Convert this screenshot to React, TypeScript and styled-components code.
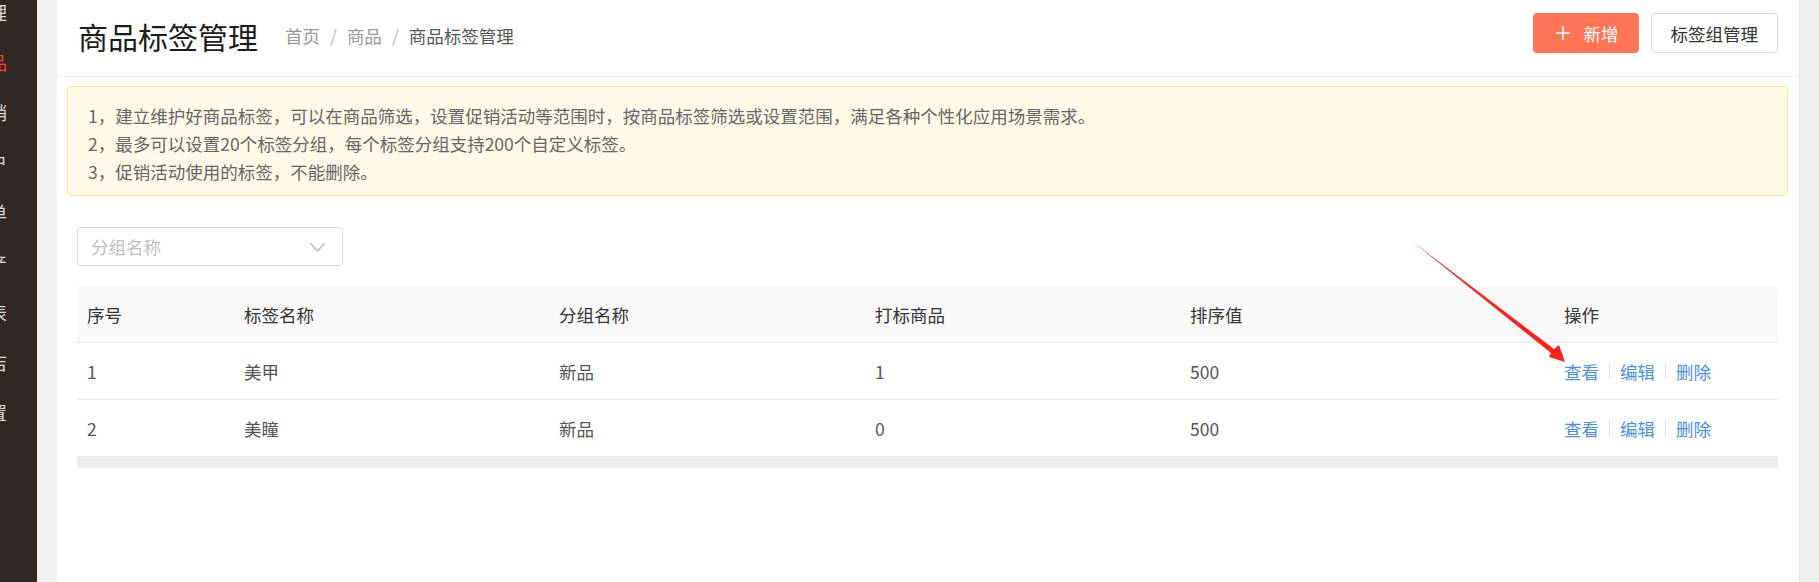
import React from 'react';
import styled, { createGlobalStyle } from 'styled-components';

type TagRow = {
    id: number;
    name: string;
    group: string;
    count: number;
    sort: number;
};

const rows: TagRow[] = [
    { id: 1, name: '美甲', group: '新品', count: 1, sort: 500 },
    { id: 2, name: '美瞳', group: '新品', count: 0, sort: 500 },
];

const menu = ['管理', '商品', '营销', '客户', '订单', '资产', '报表', '门店', '设置'];

const GlobalStyle = createGlobalStyle`
    html, body {
        margin: 0;
        padding: 0;
    }
    body {
        font-family: "Noto Sans CJK SC", "Noto Sans", sans-serif;
        background: #f0f0f0;
    }
`;

const Page = styled.div`
    position: relative;
    display: flex;
    height: 582px;
    overflow: hidden;
`;

const SideBar = styled.nav`
    width: 37px;
    flex: none;
    background: #302824;
    overflow: hidden;
`;

const NavList = styled.div`
    display: flex;
    flex-direction: column;
    margin-top: -13px;
`;

const NavItem = styled.div<{ $active?: boolean }>`
    height: 50px;
    line-height: 50px;
    margin-left: -29px;
    white-space: nowrap;
    font-size: 18px;
    color: ${(p) => (p.$active ? '#f2482b' : '#dcdcdc')};
`;

const Main = styled.main`
    flex: 1;
    min-width: 0;
    display: flex;
    padding-left: 20px;
    background: #f0f0f0;
`;

const Panel = styled.section`
    flex: 1;
    min-width: 0;
    background: #fff;
    display: flex;
    flex-direction: column;
`;

const ScrollTrack = styled.div`
    width: 20px;
    flex: none;
    box-sizing: border-box;
    background: #efefef;
    border-left: 1px solid #e4e4e4;
`;

const Header = styled.header`
    height: 77px;
    box-sizing: border-box;
    padding: 13px 21px 0 21px;
    border-bottom: 1px solid #eee;
    display: flex;
    align-items: flex-start;
`;

const Title = styled.h1`
    margin: 0;
    font-size: 30px;
    line-height: 46px;
    font-weight: normal;
    color: #1c1c1c;
`;

const Crumbs = styled.div`
    margin-left: 27px;
    font-size: 17.5px;
    line-height: 46px;
    color: #999;
    display: flex;
`;

const Crumb = styled.span<{ $current?: boolean }>`
    color: ${(p) => (p.$current ? '#555' : '#999')};
`;

const CrumbSep = styled.span`
    margin: 0 10px;
    color: #bbb;
`;

const Actions = styled.div`
    margin-left: auto;
    display: flex;
    gap: 12px;
`;

const PrimaryButton = styled.button`
    height: 40px;
    box-sizing: border-box;
    padding: 0 20px 0 22px;
    display: flex;
    align-items: center;
    gap: 13px;
    border: none;
    border-radius: 4px;
    background: #ff7555;
    color: #fff;
    font-family: inherit;
    font-size: 17.5px;
`;

const DefaultButton = styled.button`
    height: 40px;
    box-sizing: border-box;
    padding: 0 19px;
    border: 1px solid #d9d9d9;
    border-radius: 4px;
    background: #fff;
    color: #333;
    font-family: inherit;
    font-size: 17.5px;
`;

const Content = styled.div`
    padding-top: 9px;
`;

const Notice = styled.div`
    margin: 0 11px 0 10px;
    padding: 15px 20px 9px;
    border: 1px solid #fde38f;
    border-radius: 5px;
    background: #fffae8;
    color: #666;
    font-size: 17.5px;
    line-height: 28px;
`;

const ListSection = styled.div`
    padding: 31px 21px 0 20px;
`;

const Select = styled.div`
    width: 266px;
    height: 39px;
    box-sizing: border-box;
    padding: 0 16px 0 13px;
    border: 1px solid #dcdcdc;
    border-radius: 4px;
    display: flex;
    align-items: center;
    justify-content: space-between;
`;

const Placeholder = styled.span`
    font-size: 17.5px;
    color: #c0c0c0;
`;

const Table = styled.div`
    margin-top: 20px;
`;

const cols = '157px 315px 316px 315px 374px 1fr';

const HeadRow = styled.div`
    display: grid;
    grid-template-columns: ${cols};
    height: 57px;
    box-sizing: border-box;
    background: #f9f9f9;
    border-bottom: 1px solid #e6e6e6;
    border-radius: 4px 4px 0 0;
    color: #333;
`;

const Row = styled.div`
    display: grid;
    grid-template-columns: ${cols};
    height: 57px;
    box-sizing: border-box;
    border-bottom: 1px solid #e8e8e8;
    color: #555;
`;

const Cell = styled.div`
    padding-left: 10px;
    display: flex;
    align-items: center;
    font-size: 17.5px;
`;

const TableScroll = styled.div`
    height: 11px;
    background: #eee;
`;

const OpLink = styled.a`
    color: #4a90e2;
    text-decoration: none;
`;

const OpSep = styled.span`
    width: 1px;
    height: 16px;
    margin: 0 10px;
    background: #e0e0e0;
`;

const Overlay = styled.svg`
    position: absolute;
    left: 0;
    top: 0;
    pointer-events: none;
`;

const PlusIcon = () => (
    <svg width="16" height="16" viewBox="0 0 16 16">
        <path d="M8 1v14M1 8h14" stroke="#fff" strokeWidth="1.6" />
    </svg>
);

const Chevron = () => (
    <svg width="17" height="10" viewBox="0 0 17 10">
        <path d="M1 1l7.5 8L16 1" stroke="#bbb" strokeWidth="1.4" fill="none" />
    </svg>
);

const App: React.FC = () => {
    return (
        <Page>
            <GlobalStyle />
            <SideBar>
                <NavList>
                    {menu.map((m) => (
                        <NavItem key={m} $active={m === '商品'}>
                            {m}
                        </NavItem>
                    ))}
                </NavList>
            </SideBar>
            <Main>
                <Panel>
                    <Header>
                        <Title>商品标签管理</Title>
                        <Crumbs>
                            <Crumb>首页</Crumb>
                            <CrumbSep>/</CrumbSep>
                            <Crumb>商品</Crumb>
                            <CrumbSep>/</CrumbSep>
                            <Crumb $current>商品标签管理</Crumb>
                        </Crumbs>
                        <Actions>
                            <PrimaryButton>
                                <PlusIcon />
                                新增
                            </PrimaryButton>
                            <DefaultButton>标签组管理</DefaultButton>
                        </Actions>
                    </Header>
                    <Content>
                        <Notice>
                            <div>1，建立维护好商品标签，可以在商品筛选，设置促销活动等范围时，按商品标签筛选或设置范围，满足各种个性化应用场景需求。</div>
                            <div>2，最多可以设置20个标签分组，每个标签分组支持200个自定义标签。</div>
                            <div>3，促销活动使用的标签，不能删除。</div>
                        </Notice>
                        <ListSection>
                            <Select>
                                <Placeholder>分组名称</Placeholder>
                                <Chevron />
                            </Select>
                            <Table>
                                <HeadRow>
                                    <Cell>序号</Cell>
                                    <Cell>标签名称</Cell>
                                    <Cell>分组名称</Cell>
                                    <Cell>打标商品</Cell>
                                    <Cell>排序值</Cell>
                                    <Cell>操作</Cell>
                                </HeadRow>
                                {rows.map((r) => (
                                    <Row key={r.id}>
                                        <Cell>{r.id}</Cell>
                                        <Cell>{r.name}</Cell>
                                        <Cell>{r.group}</Cell>
                                        <Cell>{r.count}</Cell>
                                        <Cell>{r.sort}</Cell>
                                        <Cell>
                                            <OpLink>查看</OpLink>
                                            <OpSep />
                                            <OpLink>编辑</OpLink>
                                            <OpSep />
                                            <OpLink>删除</OpLink>
                                        </Cell>
                                    </Row>
                                ))}
                                <TableScroll />
                            </Table>
                        </ListSection>
                    </Content>
                </Panel>
                <ScrollTrack />
            </Main>
            <Overlay width="1819" height="582" viewBox="0 0 1819 582">
                <polygon
                    points="1413,242 1554,349 1559,345 1565,362 1549,357 1551,353"
                    fill="#f5231a"
                />
            </Overlay>
        </Page>
    );
};

export default App;
